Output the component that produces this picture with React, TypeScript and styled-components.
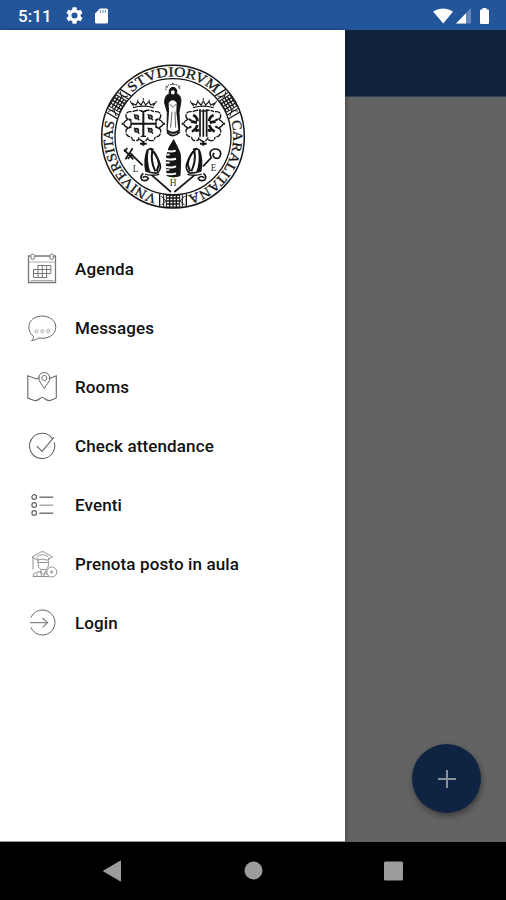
import React from "react";
import styled, { createGlobalStyle } from "styled-components";

const GlobalStyle = createGlobalStyle`
  * { box-sizing: border-box; }
  body { margin: 0; background: #000; font-family: Roboto, "Liberation Sans", sans-serif; }
`;

const Screen = styled.div`
  display: flex;
  flex-direction: column;
  width: 506px;
  height: 900px;
  overflow: hidden;
`;

const StatusBar = styled.header`
  display: flex;
  align-items: center;
  height: 30px;
  flex: none;
  padding: 1px 14px 0 18px;
  color: #fff;
  background: #22559a;
`;

const Clock = styled.span`
  width: 48px;
  font-size: 17px;
  font-weight: 500;
  line-height: 20px;
  letter-spacing: 0.1px;
`;

const StatusIcons = styled.div<{ $end?: boolean }>`
  display: flex;
  align-items: center;
  gap: ${(p) => (p.$end ? "3px" : "12px")};
  margin-left: ${(p) => (p.$end ? "auto" : "0")};
  svg { display: block; }
`;

const Body = styled.div`
  display: flex;
  flex: 1;
  min-height: 0;
`;

const Drawer = styled.aside`
  position: relative;
  width: 345px;
  flex: none;
  background: #fff;
  border-bottom: 1px solid #999;
  box-shadow: 0 1px 5px rgba(0, 0, 0, 0.4);
`;

const SealBox = styled.div`
  display: flex;
  height: 209px;
  padding: 30px 0 0 95px;
`;

const Menu = styled.nav`
  display: flex;
  flex-direction: column;
`;

const MenuItem = styled.a`
  display: flex;
  align-items: center;
  height: 59.1px;
  padding-left: 26px;
  gap: 17px;
  color: #111;
  font-size: 17px;
  font-weight: 500;
  letter-spacing: 0.13px;
  svg { flex: none; }
`;

const Dimmed = styled.main`
  display: flex;
  flex-direction: column;
  flex: 1;
  background: #636363;
`;

const AppBar = styled.div`
  height: 67px;
  background: #0f233d;
  border-bottom: 1px solid #30404f;
`;

const FabArea = styled.div`
  display: flex;
  flex: 1;
  align-items: flex-end;
  justify-content: flex-end;
  padding: 0 25px 29px 0;
`;

const Fab = styled.button`
  display: flex;
  align-items: center;
  justify-content: center;
  width: 69px;
  height: 69px;
  padding: 0;
  border: 0;
  border-radius: 50%;
  background: #0f2443;
  box-shadow: 1px 3px 6px rgba(0, 0, 0, 0.4);
`;

const NavBar = styled.footer`
  display: flex;
  justify-content: space-between;
  align-items: center;
  height: 58px;
  flex: none;
  padding: 0 102px 0 102px;
  background: #000;
  svg { display: block; }
`;

/* Point on the seal's ring; degrees run clockwise from the top. */
const at = (deg: number, r: number) => {
  const a = (deg * Math.PI) / 180;
  return `${(234 + r * Math.sin(a)).toFixed(1)} ${(230 - r * Math.cos(a)).toFixed(1)}`;
};

const legends = [
  { id: "top", text: "STVDIORVM", from: -43, to: 44 },
  { id: "right", text: "CARALITANA", from: 75, to: 166 },
  { id: "left", text: "VNIVERSITAS", from: 195, to: 284.5 },
];

const RingPanel = ({ deg }: { deg: number }) => (
  <g transform={`rotate(${deg} 234 230)`}>
    <path d="M194 20v39M274 20v39" strokeWidth="4" />
    <path d="M199 24l13 13-13 15M269 24l-13 13 13 15M206 19v38M262 19v38" strokeWidth="3" />
    <rect x="214" y="19" width="40" height="35" fill="none" strokeWidth="3" />
    <path d="M215 28h38M215 37h38M215 46h38M224 19v35M234 19v35M244 19v35" strokeWidth="4" />
  </g>
);

const Crown = ({ x }: { x: number }) => (
  <g transform={`translate(${x} 0)`} strokeWidth="3.4">
    <path d="M-31 143Q0 134 31 143M-29 138l-8-10 15 7 5-10 10 10 7-12 7 12 10-10 5 10 15-7-8 10" />
    <path d="M-40 125h3M-18 122h3M-2 117h4M16 122h3M37 125h3" strokeWidth="5" />
  </g>
);

const Cartouche = ({ x }: { x: number }) => (
  <g transform={`translate(${x} 0)`} strokeWidth="4">
    <path d="M-35 155q-18-2-17 14 1 8 8 8-14 6-15 14 1 9 15 13-9 2-8 12 0 14 17 15M35 155q18-2 17 14-1 8-8 8 14 6 15 14-1 9-15 13 9 2 8 12 0 14-17 15M-35 231q0 12 14 11 9-2 7-10 3 10 14 13 11-3 14-13-2 8 7 10 14 1 14-11M-32 155q15-8 30-1M2 154q15-7 30 1" strokeDasharray="17 3" />
    <path d="M-59 191h-6M59 191h6M-10 251h20M0 244v13M-44 177l8 5M44 177l-8 5M-44 204l8-5M44 204l-8-5" strokeWidth="6" />
  </g>
);

const Mitre = ({ x, flip }: { x: number; flip?: boolean }) => (
  <g transform={`translate(${x} 0) scale(${flip ? -1 : 1} 1)`}>
    <path d="M-20 333q-7-32 4-62l8-5q18 13 30 46 4 17-8 27-18 1-34-6z" fill="#fff" strokeWidth="5" />
    <path d="M-17 272q-8 30-2 61l12 3q-11-31-5-65z" fill="#151515" stroke="none" />
    <path d="M-1 272q-6 31 9 62M2 274q14 17 17 39l-7 21M-7 266l10 3" strokeWidth="6" />
    <path d="M-23 342q17 7 43 1" strokeWidth="4" />
    <path d="M-28 340q-12 9-4 20 14 6 19-5-7-10-17-2" strokeWidth="5" />
  </g>
);

const Seal = () => (
  <svg width="156" height="156" viewBox="0 0 468 468" fill="none" stroke="#151515">
    <circle cx="234" cy="230" r="214" strokeWidth="4.5" />
    <circle cx="234" cy="230" r="174" strokeWidth="4" />
    {legends.map((l) => (
      <g key={l.id} stroke="none" fill="#151515">
        <path id={`arc-${l.id}`} d={`M${at(l.from, 181)}A181 181 0 0 1 ${at(l.to + 2, 181)}`} fill="none" />
        <text fontFamily="'Liberation Serif', serif" fontSize="41" fontWeight="400" stroke="#151515" strokeWidth="0.9">
          <textPath
            href={`#arc-${l.id}`}
            textLength={((l.to - l.from) * Math.PI * 181) / 180}
            lengthAdjust="spacingAndGlyphs"
          >
            {l.text}
          </textPath>
        </text>
      </g>
    ))}
    <RingPanel deg={-59} />
    <RingPanel deg={59} />
    <RingPanel deg={180} />

    {/* standing figure */}
    <path d="M213 91q-3-17 20-18 24 0 21 17M218 82l-8-5M250 82l8-5M233 73v-5" strokeWidth="3" strokeDasharray="5 3" />
    <path d="M223 101q-3-18 11-19 14 1 11 19 16 7 12 28l-5 28 2 56q-18 14-38 1l1-57-8-28q-1-22 14-28z" fill="#151515" strokeWidth="3" />
    <path d="M228 94q6-7 11 0l-1 9h-9z" fill="#fff" stroke="none" />
    <path d="M221 128q12-14 24 0l-1 27 6 54q-16 12-32 0l4-54z" fill="#fff" stroke="none" />
    <path d="M224 132l10 10 10-10M231 155l-4 48M240 155l2 48" strokeWidth="2" />
    <path d="M216 217q18 20 39-1" strokeWidth="5" />

    {/* left shield */}
    <Crown x={145} />
    <Cartouche x={145} />
    <path d="M145 154v75M108 191h75" strokeWidth="6" />
    <path d="M137 154h16M137 229h16M108 184v14M183 184v14" strokeWidth="4" />
    {[[125, 171], [166, 171], [125, 211], [166, 211]].map(([x, y]) => (
      <g key={`${x}-${y}`}>
        <circle cx={x} cy={y} r="5.5" fill="#777" strokeWidth="4" />
        <path d={`M${x - 8} ${y - 8}l4 4M${x + 4} ${y + 6}l4 4`} strokeWidth="4" />
      </g>
    ))}

    {/* right shield */}
    <Crown x={325} />
    <Cartouche x={325} />
    <path d="M315 148v82M325 148v82M335 148v82" strokeWidth="5" />
    <path d="M294 166q11 3 14 17M356 166q-11 3-14 17M291 215q14-9 16-20M359 215q-14-9-16-20M288 184l18 4M362 184l-18 4M301 213l11-3M349 213l-11-3" strokeWidth="8" />

    {/* tiara, mitres and crosiers */}
    <path d="M236 239l12 24q10 17 9 36l-2 48q-20 8-39 0l-2-48q1-17 8-36z" fill="#151515" strokeWidth="3" />
    <path d="M214 272q14 5 28 0M209 296q16 5 34 0M209 319q18 7 34 0M209 340q18 6 34 0" stroke="#fff" strokeWidth="6" />
    <path d="M215 284h9M213 308h11M213 330h10" stroke="#fff" strokeWidth="5" />
    <path d="M104 278l39 38M171 346l57 50M87 269l28 29M113 265l-22 33M97 264l-9 11M113 282l-15 15" strokeWidth="5" />
    <path d="M238 396l59-49M324 319l25-26q-11-20 8-26 21-1 20 15-2 17-17 12-11-8-2-15" strokeWidth="5" />
    <Mitre x={173} />
    <Mitre x={297} flip />
    <g fill="#333" stroke="none" fontFamily="'Liberation Serif', serif" fontSize="28">
      <text x="113" y="335">L</text>
      <text x="347" y="333">E</text>
      <text x="224" y="377">H</text>
    </g>
  </svg>
);

const LineIcon = ({ children }: { children: React.ReactNode }) => (
  <svg width="32" height="32" viewBox="0 0 32 32" fill="none" stroke="#777" strokeWidth="1">
    {children}
  </svg>
);

const AgendaIcon = () => (
  <LineIcon>
    <path d="M4.500 3H2.500v26.500h27V3h-2M9 3h15" stroke="#777" strokeWidth="1.300" />
    <path d="M3 9h26M4.500 27.500h23" stroke="#aaa" />
    <rect x="5" y="1" width="3.300" height="5.500" rx="1.500" />
    <rect x="24" y="1" width="3.300" height="5.500" rx="1.500" />
    <path d="M11.500 12.500h13.300M7.500 16.500h17.300M7.500 20.500h17.300M7.500 24.500h13.300M7.500 16.500v8M12 12.500v12M16.300 12.500v12M20.600 12.500v12M24.800 12.500v8" stroke="#777" />
  </LineIcon>
);

const MessagesIcon = () => (
  <LineIcon>
    <path d="M7.400 24.200C0 18 2 7.500 11 4.800c9-2.700 18.800 2.200 18.800 10 0 8.400-8.300 12.800-17.100 11.100-2.100 1.600-4.400 2.300-7.100 2.600 1.400-1.200 2.200-2.600 1.800-4.300z" stroke="#666" />
    <g stroke="#aaa"><circle cx="10.500" cy="19.200" r="1.500" /><circle cx="16.300" cy="19.200" r="1.500" /><circle cx="22.100" cy="19.200" r="1.500" /></g>
  </LineIcon>
);

const RoomsIcon = () => (
  <LineIcon>
    <path d="M13.500 6.500L10.500 8 1.800 4.800V27l6.500 2.500q3 .5 5-1.500 3-3 6 0 2 2 5 1.500l6-2.500V4.800L23 7.700" stroke="#666" strokeWidth="1.100" />
    <path d="M18.300 17.500c-2.200-4-5.500-6.800-5.500-10.500a5.500 5.500 0 0 1 11 0c0 3.700-3.300 6.500-5.500 10.500z" stroke="#666" />
    <circle cx="18.300" cy="7" r="2.600" />
  </LineIcon>
);

const AttendanceIcon = () => (
  <LineIcon>
    <path d="M26.500 8.700A12.600 12.600 0 1 0 28.200 12.200M10.800 16.100l5.300 5.300L28 7.200" stroke="#666" strokeWidth="1.100" />
  </LineIcon>
);

const EventsIcon = () => (
  <LineIcon>
    {[8, 16, 24].map((y) => (
      <g key={y}>
        <circle cx="8.200" cy={y} r="2.300" stroke="#666" strokeWidth="1.200" />
        <path d={`M13.300 ${y + 0.200}h14`} strokeWidth="1.500" stroke={y === 16 ? "#aaa" : "#777"} />
      </g>
    ))}
  </LineIcon>
);

const SeatIcon = () => (
  <LineIcon>
    <g stroke="#888" strokeWidth="0.900">
      <path d="M6 9l8.500-4.800q2-1.200 4 0L26.500 9l-5 3.200q-5-2-10 0zM11 8.500q5.500-3.500 11 0M7 9.500v12M12 12.500l-1-3M22 11.500l1-2" />
      <path d="M12 12.500v3q0 4.500 3 6v3l2.500 2 2.500-2v-3q3-2 2.500-6v-3M12 14.500h10M15 21.500h5M15 23.500l-5 1q-3 1-3 4h16M11 25.500v3M14 23.500l2 5M19 23.500l-1 5M20 25.500l3 2" />
      <circle cx="25.800" cy="24" r="5" fill="#fff" />
      <path d="M24 24h3.500M25.800 22.200v3.500" />
    </g>
  </LineIcon>
);

const LoginIcon = () => (
  <LineIcon>
    <path d="M5 10.500A12.500 12.500 0 1 1 5 20.500" stroke="#666" />
    <path d="M4 15.700h17M16.500 11l5 4.700-5 4.700" stroke="#888" strokeWidth="1.300" />
  </LineIcon>
);

const items = [
  { label: "Agenda", Icon: AgendaIcon },
  { label: "Messages", Icon: MessagesIcon },
  { label: "Rooms", Icon: RoomsIcon },
  { label: "Check attendance", Icon: AttendanceIcon },
  { label: "Eventi", Icon: EventsIcon },
  { label: "Prenota posto in aula", Icon: SeatIcon },
  { label: "Login", Icon: LoginIcon },
];

export default function App() {
  return (
    <Screen>
      <GlobalStyle />
      <StatusBar>
        <Clock>5:11</Clock>
        <StatusIcons>
          <svg width="17" height="17" viewBox="2 2 20 20" fill="#fff">
            <path d="M19.140 12.940c.04-.3.06-.61.06-.94s-.02-.64-.07-.94l2.030-1.580a.49.49 0 0 0 .12-.61l-1.920-3.320a.49.49 0 0 0-.59-.22l-2.390.96a7 7 0 0 0-1.620-.94l-.36-2.540a.48.48 0 0 0-.48-.41h-3.840a.47.47 0 0 0-.47.41l-.36 2.540c-.59.24-1.130.57-1.620.94l-2.390-.96a.47.47 0 0 0-.59.22L2.740 8.870a.48.48 0 0 0 .12.61l2.030 1.580c-.05.3-.09.63-.09.94s.02.64.07.94l-2.030 1.580a.49.49 0 0 0-.12.61l1.920 3.320c.12.22.37.29.59.22l2.390-.96c.5.38 1.030.7 1.620.94l.36 2.540c.05.24.24.41.48.41h3.840c.24 0 .44-.17.47-.41l.36-2.540a7 7 0 0 0 1.620-.94l2.390.96c.22.08.47 0 .59-.22l1.920-3.320a.47.47 0 0 0-.12-.61zM12 15.600a3.600 3.600 0 1 1 0-7.200 3.600 3.600 0 0 1 0 7.200z" />
          </svg>
          <svg width="15" height="16" viewBox="0 0 15 16">
            <path d="M5 .5h6.500a1.500 1.500 0 0 1 1.500 1.500v12a1.500 1.500 0 0 1-1.500 1.500h-10A1.500 1.500 0 0 1 0 14V5.500z" fill="#fff" />
            <path d="M5.500 2v3M8 2v3M10.500 2v3" stroke="#7795bd" strokeWidth="1.100" />
          </svg>
        </StatusIcons>
        <StatusIcons $end>
          <svg width="20" height="16" viewBox="0 0 20 16"><path d="M0 3.500Q10-2.500 20 3.500L10.300 15.500z" fill="#fff" /></svg>
          <svg width="15" height="16" viewBox="0 0 15 16"><path d="M15 0v15.500H0z" fill="#6488bd" /><path d="M10 5.200v10.300H0z" fill="#fff" /></svg>
          <svg width="18" height="18" viewBox="0 0 18 18"><path d="M8.500 1h4v1.500H14q1 0 1 1V16q0 1-1 1H7q-1 0-1-1V3.500q0-1 1-1h1.500z" fill="#fff" /></svg>
        </StatusIcons>
      </StatusBar>
      <Body>
        <Drawer>
          <SealBox><Seal /></SealBox>
          <Menu>
            {items.map(({ label, Icon }) => (
              <MenuItem key={label}><Icon />{label}</MenuItem>
            ))}
          </Menu>
        </Drawer>
        <Dimmed>
          <AppBar />
          <FabArea>
            <Fab aria-label="Add">
              <svg width="20" height="20" viewBox="0 0 20 20"><path d="M10 1v18M1 10h18" stroke="#8a929c" strokeWidth="2" /></svg>
            </Fab>
          </FabArea>
        </Dimmed>
      </Body>
      <NavBar>
        <svg width="20" height="22" viewBox="0 0 20 22"><path d="M1.500 11L18.500 1v20z" fill="#9c9c9c" stroke="#9c9c9c" strokeLinejoin="round" /></svg>
        <svg width="20" height="20" viewBox="0 0 20 20"><circle cx="10.500" cy="9.500" r="9" fill="#9c9c9c" /></svg>
        <svg width="20" height="20" viewBox="0 0 20 20"><rect x="0" y=".5" width="19" height="19" rx="1.500" fill="#9c9c9c" /></svg>
      </NavBar>
    </Screen>
  );
}
